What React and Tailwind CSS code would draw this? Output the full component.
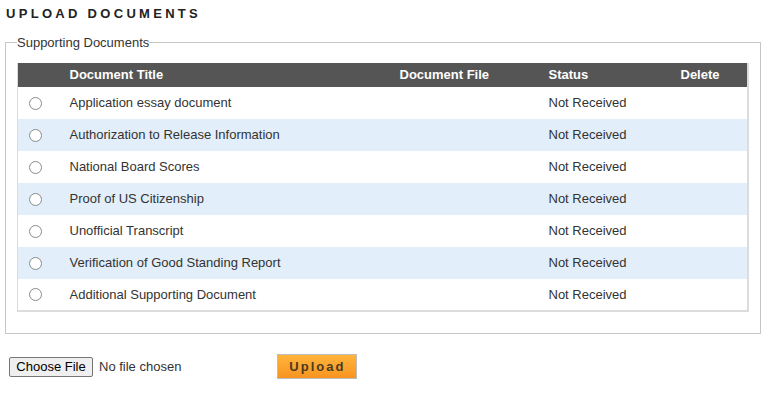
const documents = [
  "Application essay document",
  "Authorization to Release Information",
  "National Board Scores",
  "Proof of US Citizenship",
  "Unofficial Transcript",
  "Verification of Good Standing Report",
  "Additional Supporting Document",
];

function App() {
  return (
    <div className="min-h-[394px] bg-white px-[5px] pt-[6px] text-[13px] text-[#333] [font-family:'Liberation_Sans',Arial,sans-serif]">
      <h1 className="pl-[1px] text-[13px] font-bold leading-[16px] tracking-[3.3px] text-[#222]">UPLOAD DOCUMENTS</h1>

      <fieldset className="mt-[13px] w-[755px] border border-[#c6c6c6] px-[11px] pt-[13px] pb-[21px]">
        <legend className="text-[13px] leading-[15px] text-[#333]">Supporting Documents</legend>

        <table className="w-[732px] table-fixed border-collapse border-r-2 border-b-2 border-l border-[#dcdcdc]">
          <colgroup>
            <col className="w-[52px]" />
            <col className="w-[330px]" />
            <col className="w-[149px]" />
            <col className="w-[132px]" />
            <col />
          </colgroup>
          <thead>
            <tr className="h-[24px] bg-[#555] text-left text-[13px] font-bold text-white">
              <th />
              <th className="font-bold">Document Title</th>
              <th className="font-bold">Document File</th>
              <th className="font-bold">Status</th>
              <th className="font-bold">Delete</th>
            </tr>
          </thead>
          <tbody>
            {documents.map((title, index) => (
              <tr key={title} className={`h-[32px] ${index % 2 === 1 ? "bg-[#e2eef9]" : "bg-white"}`}>
                <td className="pl-[11px]">
                  <span className="block h-[13px] w-[13px] rounded-full border border-[#8a8a8a] bg-white" />
                </td>
                <td>{title}</td>
                <td />
                <td>Not Received</td>
                <td />
              </tr>
            ))}
          </tbody>
        </table>
      </fieldset>

      <div className="mt-[20px] flex items-center pl-[4px]">
        <button
          type="button"
          className="h-[20px] w-[84px] rounded-[2px] border border-[#767676] bg-[#efefef] text-[13px] leading-[18px] text-black"
        >
          Choose File
        </button>
        <span className="ml-[6px] text-[13px] text-[#333]">No file chosen</span>
        <button
          type="button"
          className="ml-[96px] h-[25px] w-[80px] border border-[#bdbdbd] bg-gradient-to-b from-[#ffb43c] to-[#f7941f] text-[13px] font-bold tracking-[2px] text-[#4a3b1f]"
        >
          Upload
        </button>
      </div>
    </div>
  );
}

export default App;
